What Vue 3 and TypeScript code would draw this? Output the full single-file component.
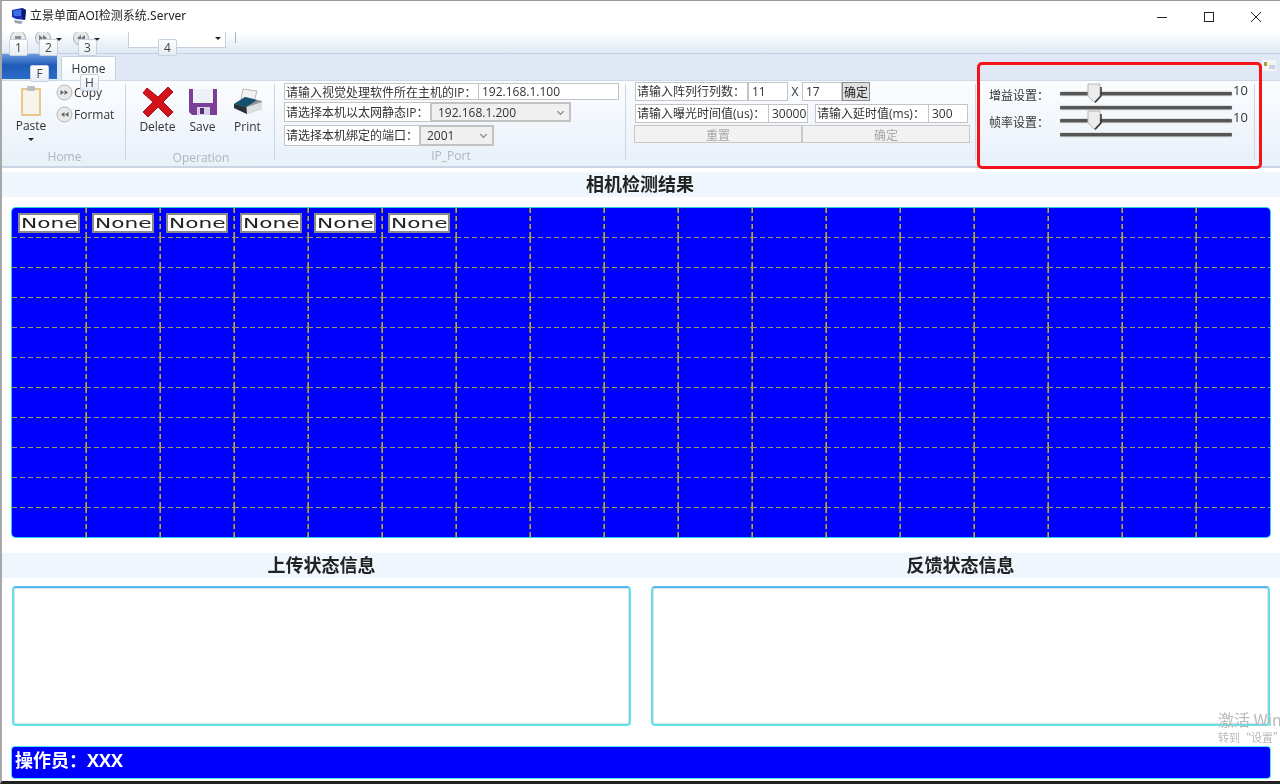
<script setup lang="ts">
const rows = 11;
const cols = 17;

interface Cell {
  id: number;
  text: string;
  firstCol: boolean;
  lastCol: boolean;
  lastRow: boolean;
}

const cells: Cell[] = Array.from({ length: rows * cols }, (_, i) => ({
  id: i,
  text: i < 6 ? 'None' : '',
  firstCol: i % cols === 0,
  lastCol: (i + 1) % cols === 0,
  lastRow: i >= (rows - 1) * cols,
}));
</script>

<template>
  <div class="window">
    <header class="titlebar">
      <svg class="app-icon" width="16" height="18" viewBox="0 0 16 18">
        <path d="M1 3 L11 1 L15 3 L14 13 L5 12 L1 10 Z" fill="#1a2fb8" />
        <path d="M2 4 L10 2.5 L10 9 L3 9 Z" fill="#3f6fe0" />
        <path d="M11 1 L15 3 L14 13 L11 11 Z" fill="#10186a" />
        <path d="M3 13 L12 14.5 L10 17 L4 16 Z" fill="#9aa3b5" />
      </svg>
      <span class="title">立景单面AOI检测系统.Server</span>
      <div class="win-btns">
        <svg width="12" height="12" viewBox="0 0 12 12"><path d="M1 6.5 H11" stroke="#222" fill="none" /></svg>
        <svg width="12" height="12" viewBox="0 0 12 12"><rect x="1.5" y="1.5" width="9" height="9" stroke="#222" fill="none" /></svg>
        <svg width="12" height="12" viewBox="0 0 12 12"><path d="M1 1 L11 11 M11 1 L1 11" stroke="#222" fill="none" /></svg>
      </div>
    </header>

    <div class="qat">
      <svg class="qat-circle" width="16" height="16" viewBox="0 0 16 16">
        <circle cx="8" cy="8" r="7.5" fill="#e6e8ec" stroke="#aab0b8" />
        <path d="M5 6 H11 V10 H5 Z" fill="#8a8f96" />
      </svg>
      <svg class="qat-circle second" width="16" height="16" viewBox="0 0 16 16">
        <circle cx="8" cy="8" r="7.5" fill="#e6e8ec" stroke="#aab0b8" />
        <path d="M4 5 L8 8 L4 11 Z M8 5 L12 8 L8 11 Z" fill="#777" />
      </svg>
      <span class="qat-caret"></span>
      <svg class="qat-circle third" width="16" height="16" viewBox="0 0 16 16">
        <circle cx="8" cy="8" r="7.5" fill="#e6e8ec" stroke="#aab0b8" />
        <path d="M8 5 L4 8 L8 11 Z M12 5 L8 8 L12 11 Z" fill="#777" />
      </svg>
      <span class="qat-caret"></span>
      <div class="qat-combo"><span class="qat-caret"></span></div>
      <span class="qat-sep"></span>
    </div>

    <nav class="tabs">
      <div class="file-tab"></div>
      <div class="home-tab">Home</div>
      <svg class="help" width="14" height="11" viewBox="0 0 14 11">
        <rect width="14" height="11" fill="#f3f5f2" />
        <rect x="2" y="2" width="3" height="4" fill="#a8a040" />
        <rect x="7" y="5" width="6" height="4" fill="#c8d2dc" />
      </svg>
    </nav>

    <section class="ribbon">
      <div class="group group-home">
        <div class="group-body home-body">
          <div class="paste">
            <svg width="24" height="32" viewBox="0 0 24 32">
              <rect x="2" y="3" width="20" height="28" rx="1" fill="#e9c98a" />
              <rect x="4" y="5" width="16" height="24" fill="#f6f3ea" />
              <rect x="8" y="1" width="8" height="5" rx="1" fill="#b9bec6" />
            </svg>
            <span>Paste</span>
            <i class="caret"></i>
          </div>
          <div class="small-btns">
            <div class="small-btn">
              <svg width="17" height="17" viewBox="0 0 17 17">
                <circle cx="8.5" cy="8.5" r="7.5" fill="#e9e9e9" stroke="#b4b4b4" />
                <path d="M4.5 6 L8 8.5 L4.5 11 Z M8.5 6 L12 8.5 L8.5 11 Z" fill="#666" />
              </svg>
              <span>Copy</span>
            </div>
            <div class="small-btn">
              <svg width="17" height="17" viewBox="0 0 17 17">
                <circle cx="8.5" cy="8.5" r="7.5" fill="#e9e9e9" stroke="#b4b4b4" />
                <path d="M8.5 6 L5 8.5 L8.5 11 Z M12.5 6 L9 8.5 L12.5 11 Z" fill="#666" />
              </svg>
              <span>Format</span>
            </div>
          </div>
        </div>
        <div class="group-label">Home</div>
      </div>

      <div class="group group-op">
        <div class="group-body op-body">
          <div class="big-btn">
            <svg width="32" height="32" viewBox="0 0 32 32">
              <path d="M5 2 L16 11 L26 1 L31 6 L21 16 L31 26 L26 31 L16 21 L6 31 L1 26 L11 16 L1 7 Z" fill="#d3121c" stroke="#a8101a" />
            </svg>
            <span>Delete</span>
          </div>
          <div class="big-btn">
            <svg width="30" height="30" viewBox="0 0 30 30">
              <path d="M1 2 H29 V28 H4 L1 25 Z" fill="#7c3f98" />
              <rect x="5" y="2" width="20" height="14" fill="#eef0f7" />
              <rect x="9" y="20" width="13" height="8" fill="#d8d2e4" />
              <rect x="12" y="21" width="4" height="6" fill="#5a2c74" />
            </svg>
            <span>Save</span>
          </div>
          <div class="big-btn">
            <svg width="30" height="30" viewBox="0 0 30 30">
              <path d="M10 2 L24 4 L21 14 L8 12 Z" fill="#f2f2f2" stroke="#b8b8b8" />
              <path d="M1 17 L12 10 L29 14 L29 22 L14 27 L1 21 Z" fill="#8d939a" />
              <path d="M1 17 L12 10 L24 13 L13 20 Z" fill="#17506f" />
              <path d="M1 17 L13 20 L14 27 L1 21 Z" fill="#2a2f36" />
              <path d="M14 20 L29 15 L29 22 L14 27 Z" fill="#dcdfe2" />
            </svg>
            <span>Print</span>
          </div>
        </div>
        <div class="group-label">Operation</div>
      </div>

      <div class="group group-ip">
        <div class="group-body ip-body">
          <div class="field-row row-a">
            <label class="field w-195">请输入视觉处理软件所在主机的IP：</label>
            <input class="input w-140" value="192.168.1.100" readonly />
          </div>
          <div class="field-row row-b">
            <label class="field w-147">请选择本机以太网静态IP：</label>
            <div class="combo w-140"><span>192.168.1.200</span><i class="chev"></i></div>
          </div>
          <div class="field-row row-c">
            <label class="field w-136">请选择本机绑定的端口：</label>
            <div class="combo w-74"><span>2001</span><i class="chev"></i></div>
          </div>
        </div>
        <div class="group-label">IP_Port</div>
      </div>

      <div class="group group-array">
        <div class="array-body">
          <div class="field-row array-a">
            <label class="field w-113">请输入阵列行列数：</label>
            <input class="input w-40" value="11" readonly />
            <span class="x">X</span>
            <input class="input w-40" value="17" readonly />
            <button class="confirm-small">确定</button>
          </div>
          <div class="field-row array-b">
            <label class="field w-134">请输入曝光时间值(us)：</label>
            <input class="input w-39" value="30000" readonly />
            <label class="field w-114 gap-7">请输入延时值(ms)：</label>
            <input class="input w-39" value="300" readonly />
          </div>
          <div class="field-row array-c">
            <button class="disabled-btn">重置</button>
            <button class="disabled-btn">确定</button>
          </div>
        </div>
      </div>

      <div class="group group-slider">
        <div class="slider-row">
          <span class="slider-label">增益设置：</span>
          <div class="slider">
            <i class="track"></i>
            <i class="track lower"></i>
            <svg class="thumb" width="15" height="20" viewBox="0 0 15 20">
              <path d="M1 1 H13 V13 L7 19 L1 13 Z" fill="#ececec" stroke="#b5b5b5" />
              <path d="M14 4 V13 L8 19.5" stroke="#333" stroke-width="1.5" fill="none" />
            </svg>
          </div>
          <span class="slider-val">10</span>
        </div>
        <div class="slider-row">
          <span class="slider-label">帧率设置：</span>
          <div class="slider">
            <i class="track"></i>
            <i class="track lower"></i>
            <svg class="thumb" width="15" height="20" viewBox="0 0 15 20">
              <path d="M1 1 H13 V13 L7 19 L1 13 Z" fill="#ececec" stroke="#b5b5b5" />
              <path d="M14 4 V13 L8 19.5" stroke="#333" stroke-width="1.5" fill="none" />
            </svg>
          </div>
          <span class="slider-val">10</span>
        </div>
      </div>
    </section>

    <main class="main">
      <h2 class="band">相机检测结果</h2>
      <div class="grid-panel">
        <div
          v-for="cell in cells"
          :key="cell.id"
          class="cell"
          :class="{ 'first-col': cell.firstCol, 'last-col': cell.lastCol, 'last-row': cell.lastRow }"
        >
          <span v-if="cell.text" class="none-tag"><span class="none-text">{{ cell.text }}</span></span>
        </div>
      </div>
      <div class="band band-two">
        <h2>上传状态信息</h2>
        <h2>反馈状态信息</h2>
      </div>
      <div class="status-boxes">
        <div class="status-box"></div>
        <div class="status-box"></div>
      </div>
      <div class="operator">操作员：XXX</div>
    </main>

    <!-- keytips and annotation sit on top of the ribbon -->
    <span class="keytip" style="left: 7px; top: 38px">1</span>
    <span class="keytip" style="left: 37px; top: 38px">2</span>
    <span class="keytip" style="left: 76px; top: 38px">3</span>
    <span class="keytip" style="left: 156px; top: 38px">4</span>
    <span class="keytip" style="left: 28px; top: 64px">F</span>
    <span class="keytip" style="left: 78px; top: 73px">H</span>
    <div class="red-mark"></div>
    <div class="watermark">
      <div class="wm-big">激活 Windows</div>
      <div class="wm-small">转到“设置”以激活 Windows。</div>
    </div>
  </div>
</template>

<style>
html,
body {
  margin: 0;
  background: #fff;
}
</style>

<style scoped>
.window {
  position: relative;
  width: 1280px;
  height: 784px;
  box-sizing: border-box;
  border-top: 1px solid #9a9a9a;
  border-left: 2px solid #a8a8a8;
  border-bottom: 3px solid #222;
  overflow: hidden;
  display: flex;
  flex-direction: column;
  background: #fff;
  font-family: "Open Sans", "Noto Sans CJK SC", sans-serif;
  font-size: 12px;
  color: #333;
  filter: blur(0.3px);
}

.titlebar {
  height: 31px;
  flex: none;
  display: flex;
  align-items: center;
  padding-left: 9px;
  background: #fff;
}
.app-icon {
  margin: -2px 3px 0 0;
}
.title {
  margin-top: -3px;
  font-family: "Noto Sans", "Noto Sans CJK SC", sans-serif;
  font-size: 12px;
  color: #222;
}
.win-btns {
  margin-left: auto;
  display: flex;
  gap: 35px;
  padding-right: 18px;
}

.qat {
  height: 21px;
  flex: none;
  display: flex;
  align-items: flex-start;
  padding-left: 8px;
  background: linear-gradient(#fff, #dfe8f3);
  overflow: hidden;
}
.qat-circle {
  flex: none;
  margin-top: -2px;
}
.qat-circle.second {
  margin-left: 9px;
}
.qat-circle.third {
  margin-left: 11px;
}
.qat-caret {
  width: 0;
  height: 0;
  margin: 6px 0 0 5px;
  border-left: 3px solid transparent;
  border-right: 3px solid transparent;
  border-top: 3px solid #222;
}
.qat-combo {
  width: 98px;
  height: 16px;
  box-sizing: border-box;
  margin: 0 0 0 28px;
  background: #fff;
  border: 1px solid #c7d0da;
  border-top: none;
  display: flex;
  justify-content: flex-end;
  padding-right: 4px;
}
.qat-combo .qat-caret {
  margin-top: 5px;
}
.qat-sep {
  width: 1px;
  height: 11px;
  margin-left: 9px;
  background: #aab0b8;
}

.tabs {
  height: 27px;
  flex: none;
  display: flex;
  align-items: flex-end;
  background: #dfe8f4;
  border-top: 1px solid #c4d1df;
  box-sizing: border-box;
  position: relative;
}
.file-tab {
  width: 55px;
  height: 25px;
  align-self: flex-start;
  background: linear-gradient(#6c9be0, #1f5bb8 45%, #2b6cc8);
}
.home-tab {
  width: 55px;
  height: 24px;
  margin-left: 4px;
  box-sizing: border-box;
  text-align: center;
  line-height: 24px;
  background: linear-gradient(#fff, #f4f8fc);
  border: 1px solid #c4d1df;
  border-bottom: none;
  border-radius: 2px 2px 0 0;
  font-size: 12px;
  color: #333;
}
.help {
  position: absolute;
  right: 4px;
  top: 6px;
}

.ribbon {
  height: 88px;
  flex: none;
  box-sizing: border-box;
  display: flex;
  padding-top: 3px;
  background: linear-gradient(#fbfdff, #e8f0f9);
  border-bottom: 2px solid #c9d5e2;
  border-top: 1px solid #cdd9e6;
}
.group {
  position: relative;
  flex: none;
  height: 76px;
  box-sizing: border-box;
  border-right: 1px solid #cdd6e0;
  display: flex;
  flex-direction: column;
}
.group-home {
  width: 124px;
}
.group-op {
  width: 149px;
}
.group-ip {
  width: 351px;
}
.group-array {
  width: 350px;
}
.group-slider {
  width: 279px;
  padding: 2px 0 0 13px;
}
.group-body {
  height: 64px;
  flex: none;
  display: flex;
}
.group-label {
  padding-left: 2px;
  text-align: center;
  color: #b0b6bd;
  font-size: 12px;
  line-height: 16px;
}

.home-body {
  padding: 1px 0 0 12px;
  gap: 8px;
}
.paste {
  display: flex;
  flex-direction: column;
  align-items: center;
  width: 34px;
}
.paste span {
  margin-top: 2px;
  line-height: 14px;
}
.caret {
  width: 0;
  height: 0;
  margin-top: 5px;
  border-left: 3px solid transparent;
  border-right: 3px solid transparent;
  border-top: 3px solid #222;
}
.small-btns {
  display: flex;
  flex-direction: column;
  gap: 4px;
  margin-top: -2px;
}
.small-btn {
  display: flex;
  align-items: center;
  height: 18px;
}
.small-btn span {
  margin-left: 1px;
}

.op-body {
  padding: 2px 0 0 9px;
}
.big-btn {
  width: 45px;
  display: flex;
  flex-direction: column;
  align-items: center;
}
.big-btn svg {
  height: 32px;
}
.big-btn span {
  margin-top: 1px;
  line-height: 16px;
}

.ip-body {
  flex-direction: column;
}
.field-row {
  display: flex;
  align-items: stretch;
}
.ip-body .field-row {
  padding-left: 9px;
}
.row-a {
  height: 17px;
  margin-top: -1px;
}
.row-b {
  height: 20px;
  margin-top: 2px;
}
.row-c {
  height: 21px;
  margin-top: 3px;
}
.field {
  box-sizing: border-box;
  display: flex;
  align-items: center;
  padding: 0 0 1px 1px;
  background: #fff;
  border: 1px solid #c4c4c4;
  font-size: 12px;
  white-space: nowrap;
  color: #333;
}
.row-a .field {
  padding-bottom: 0;
}
.input {
  box-sizing: border-box;
  margin: 0;
  padding: 0 0 0 3px;
  background: #fff;
  border: 1px solid #c4c4c4;
  border-left: none;
  font: inherit;
  font-size: 12px;
  color: #333;
  outline: none;
}
.combo {
  box-sizing: border-box;
  display: flex;
  align-items: center;
  justify-content: space-between;
  padding: 0 5px 0 6px;
  background: #f0f0f0;
  border: 2px solid #c2c2c2;
  border-left-width: 1px;
  font-size: 12px;
}
.chev {
  width: 4px;
  height: 4px;
  margin: -2px 1px 0 0;
  border-right: 1px solid #777;
  border-bottom: 1px solid #777;
  transform: rotate(45deg);
}
.w-195 { width: 195px; }
.w-140 { width: 140px; }
.w-147 { width: 147px; }
.w-136 { width: 136px; }
.w-74 { width: 74px; }
.w-113 { width: 113px; }
.w-134 { width: 134px; }
.w-114 { width: 114px; }
.w-40 { width: 40px; }
.w-39 { width: 39px; }
.gap-7 { margin-left: 7px; }

.array-body {
  padding-left: 9px;
  display: flex;
  flex-direction: column;
}
.array-a {
  height: 19px;
  margin-top: -2px;
}
.array-b {
  height: 19px;
  margin-top: 3px;
}
.array-c {
  height: 18px;
  margin: 2px 0 0 -1px;
}
.x {
  width: 14px;
  text-align: center;
  line-height: 19px;
}
.array-a .input {
  border-left: 1px solid #c4c4c4;
}
.confirm-small {
  width: 28px;
  margin: 0;
  padding: 0;
  background: #e1e1e1;
  border: 1px solid #8a8a8a;
  font: inherit;
  font-size: 12px;
  color: #222;
}
.disabled-btn {
  width: 168px;
  margin: 0;
  padding: 0;
  background: #f2f2f2;
  border: 1px solid #c8c8c8;
  font: inherit;
  font-size: 12px;
  color: #a6a6a6;
}

.slider-row {
  display: flex;
  height: 27px;
  align-items: flex-start;
}
.slider-label {
  width: 71px;
  padding-top: 1px;
  font-size: 12px;
  line-height: 17px;
}
.slider {
  position: relative;
  width: 172px;
  height: 27px;
}
.track {
  position: absolute;
  left: 0;
  right: 0;
  top: 6px;
  height: 3px;
  border-radius: 1px;
  background: #555;
  box-shadow: 0 -1px 1px #ddd, 0 1px 1px #999;
}
.track.lower {
  top: 20px;
}
.thumb {
  position: absolute;
  left: 27px;
  top: -3px;
}
.slider-val {
  margin: -4px 0 0 1px;
  line-height: 14px;
  padding-top: 1px;
  font-size: 13px;
}

.main {
  flex: 1;
  min-height: 0;
  padding-top: 4px;
  display: flex;
  flex-direction: column;
}
.band {
  height: 25px;
  flex: none;
  margin: 0;
  background: #eff6fd;
  text-align: center;
  font-size: 18px;
  font-weight: 700;
  line-height: 25px;
  color: #222;
  padding-right: 2px;
}
.band-two {
  display: grid;
  grid-template-columns: 1fr 1fr;
  margin-top: 16px;
  padding: 0;
}
.band-two h2 {
  margin: 0;
  font-size: 18px;
  line-height: 25px;
  color: #222;
}
.grid-panel {
  flex: none;
  display: grid;
  grid-template-columns: repeat(17, 74px);
  grid-template-rows: repeat(10, 30px) 29px;
  width: 1258px;
  height: 329px;
  margin: 11px 0 0 10px;
  background: #00f;
  border-radius: 4px;
  box-shadow: 0 0 0 1px #2ccbe6;
  overflow: hidden;
}
.cell {
  --line-right: 1px;
  --line-left: 1px;
  --line-bottom: 1px;
  box-sizing: border-box;
  padding: 5px 0 0 6px;
  background-image:
    repeating-linear-gradient(to bottom, #77743c 0 5px, transparent 5px 8px),
    repeating-linear-gradient(to bottom, #b8aa30 0 5px, transparent 5px 8px),
    repeating-linear-gradient(to right, #9c9a60 0 5px, transparent 5px 8px);
  background-size: var(--line-right) 100%, var(--line-left) 100%, 100% var(--line-bottom);
  background-position: right top, left top, left bottom;
  background-repeat: no-repeat;
}
.cell.first-col {
  --line-left: 0px;
}
.cell.last-col {
  --line-right: 0px;
}
.cell.last-row {
  --line-bottom: 0px;
}
.none-tag {
  display: block;
  width: 62px;
  height: 20px;
  box-sizing: border-box;
  background: #fff;
  border: 2px solid #8a8a8a;
  text-align: center;
  font-family: "DejaVu Sans", sans-serif;
  font-size: 14px;
  line-height: 17px;
  color: #222;
}
.none-text {
  display: inline-block;
  transform: scaleX(1.55);
}
.status-boxes {
  flex: none;
  display: flex;
  gap: 20px;
  margin: 8px 0 0 10px;
}
.status-box {
  width: 619px;
  height: 140px;
  box-sizing: border-box;
  background: #fff;
  border: 2px solid #5fe4ec;
  border-top-color: #55b8f0;
  border-radius: 4px;
  box-shadow: inset 0 0 0 1px #e0e0e0;
}
.operator {
  flex: none;
  width: 1258px;
  height: 31px;
  box-sizing: border-box;
  margin: 21px 0 0 10px;
  padding-left: 3px;
  background: #00f;
  border-radius: 3px;
  box-shadow: 0 0 0 1px #4fe6f0;
  color: #fff;
  font-size: 18px;
  font-weight: 700;
  line-height: 26px;
}

.keytip {
  position: absolute;
  width: 19px;
  height: 17px;
  box-sizing: border-box;
  text-align: center;
  line-height: 16px;
  font-size: 12px;
  background: linear-gradient(#fdfefe, #e6edf5);
  border: 1px solid #c7d2de;
  border-radius: 2px;
  color: #444;
}
.red-mark {
  position: absolute;
  left: 975px;
  top: 61px;
  width: 285px;
  height: 107px;
  box-sizing: border-box;
  border: 3px solid #f5131a;
  border-radius: 5px;
}
.watermark {
  position: absolute;
  left: 1216px;
  top: 708px;
  width: 62px;
  overflow: hidden;
  white-space: nowrap;
  color: #b9b9b9;
  font-family: "Noto Sans CJK SC", sans-serif;
}
.wm-big {
  font-size: 16px;
  line-height: 20px;
}
.wm-small {
  font-size: 11px;
  line-height: 17px;
}
</style>
